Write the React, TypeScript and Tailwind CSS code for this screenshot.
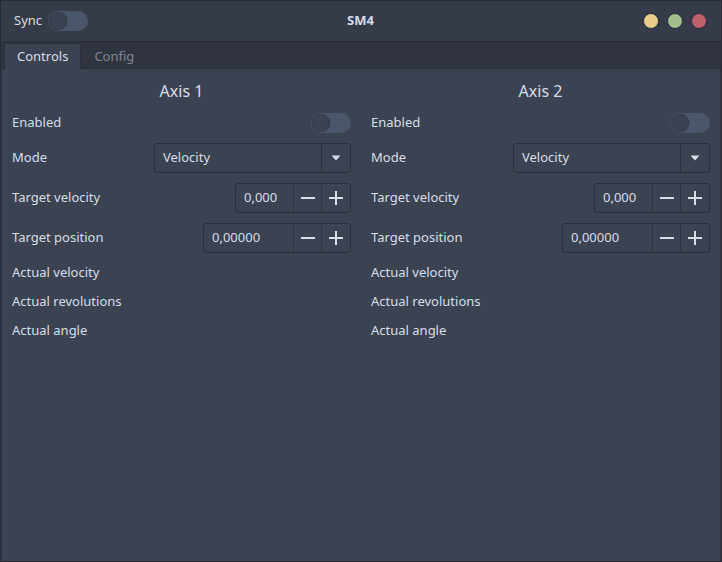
import React from "react";

const font = { fontFamily: '"Noto Sans", "Open Sans", sans-serif' };

function Toggle() {
  return (
    <div className="w-[40px] h-[20px] rounded-full bg-[#4c566a] flex items-center pl-[1px]">
      <div className="w-[18px] h-[18px] rounded-full bg-[#3b4252] border border-[#353b48] shadow-[0_0_1px_rgba(0,0,0,0.4)]" />
    </div>
  );
}

function Minus() {
  return (
    <svg width="16" height="16" viewBox="0 0 16 16">
      <path d="M1 8h14" stroke="#d8dee9" strokeWidth="2" />
    </svg>
  );
}

function Plus() {
  return (
    <svg width="16" height="16" viewBox="0 0 16 16">
      <path d="M1 8h14M8 1v14" stroke="#d8dee9" strokeWidth="2" />
    </svg>
  );
}

function SpinBox({ value, width }: { value: string; width: string }) {
  return (
    <div className={`${width} h-[30px] flex rounded-[3px] border border-[#2a2f3a] bg-[#3b4252]`}>
      <div className="flex-1 flex items-center pl-[8px] text-[#d8dee9]">{value}</div>
      <div className="w-[28px] flex items-center justify-center border-l border-[#2f3440]">
        <Minus />
      </div>
      <div className="w-[29px] flex items-center justify-center border-l border-[#2f3440]">
        <Plus />
      </div>
    </div>
  );
}

function ComboBox() {
  return (
    <div className="w-[197px] h-[30px] flex rounded-[3px] border border-[#2a2f3a] bg-[#3b4252]">
      <div className="flex-1 flex items-center pl-[8px] text-[#d8dee9]">Velocity</div>
      <div className="w-[29px] flex items-center justify-center border-l border-[#2a2f3a]">
        <svg width="10" height="6" viewBox="0 0 10 6">
          <path d="M0.5 0.5h9L5 5.5z" fill="#d8dee9" />
        </svg>
      </div>
    </div>
  );
}

function Row({ label, children }: { label: string; children?: React.ReactNode }) {
  return (
    <div className="flex items-center justify-between">
      <span className="text-[#d8dee9]">{label}</span>
      {children}
    </div>
  );
}

function Axis({ title }: { title: string }) {
  return (
    <div className="flex flex-col">
      <div className="h-[24px] flex items-center justify-center text-[16px] text-[#d8dee9] mb-[10px]">
        {title}
      </div>
      <div className="flex flex-col gap-[10px]">
        <div className="h-[20px] flex items-center justify-between">
          <span className="text-[#d8dee9]">Enabled</span>
          <Toggle />
        </div>
        <Row label="Mode">
          <ComboBox />
        </Row>
        <Row label="Target velocity">
          <SpinBox value="0,000" width="w-[116px]" />
        </Row>
        <Row label="Target position">
          <SpinBox value="0,00000" width="w-[148px]" />
        </Row>
        <div className="h-[19px] flex items-center text-[#d8dee9]">Actual velocity</div>
        <div className="h-[19px] flex items-center text-[#d8dee9]">Actual revolutions</div>
        <div className="h-[19px] flex items-center text-[#d8dee9]">Actual angle</div>
      </div>
    </div>
  );
}

export default function App() {
  return (
    <div
      className="w-[722px] h-[562px] bg-[#3b4252] border border-[#262b35] flex flex-col text-[13px] overflow-hidden"
      style={font}
    >
      {/* title bar */}
      <div className="h-[41px] shrink-0 bg-[#353b48] border-b border-[#282d37] flex items-center pl-[13px] pr-[14px]">
        <div className="flex items-center gap-[6px] w-[200px]">
          <span className="text-[#d8dee9]">Sync</span>
          <Toggle />
        </div>
        <div className="flex-1 text-center font-bold text-[#d8dee9]">SM4</div>
        <div className="w-[200px] flex justify-end gap-[8px]">
          <div className="w-[16px] h-[16px] rounded-full bg-[#ebcb8b] border-[1.5px] border-[#272c36]" />
          <div className="w-[16px] h-[16px] rounded-full bg-[#a3be8c] border-[1.5px] border-[#272c36]" />
          <div className="w-[16px] h-[16px] rounded-full bg-[#bf616a] border-[1.5px] border-[#272c36]" />
        </div>
      </div>

      {/* tab bar */}
      <div className="h-[27px] shrink-0 bg-[#2f3440] flex items-end pl-[3px] border-b border-[#292e38]">
        <div className="h-[26px] px-[12px] flex items-center bg-[#3b4252] border-x border-t border-[#292e38] rounded-t-[2px] text-[#d8dee9] -mb-[1px]">
          Controls
        </div>
        <div className="h-[26px] px-[13px] pt-[2px] flex items-center text-[#7d8597] -mb-[1px]">Config</div>
      </div>

      {/* content */}
      <div className="flex-1 grid grid-cols-2 gap-[20px] px-[10px] pt-[10px] border-x border-[#333844]">
        <Axis title="Axis 1" />
        <Axis title="Axis 2" />
      </div>
    </div>
  );
}
